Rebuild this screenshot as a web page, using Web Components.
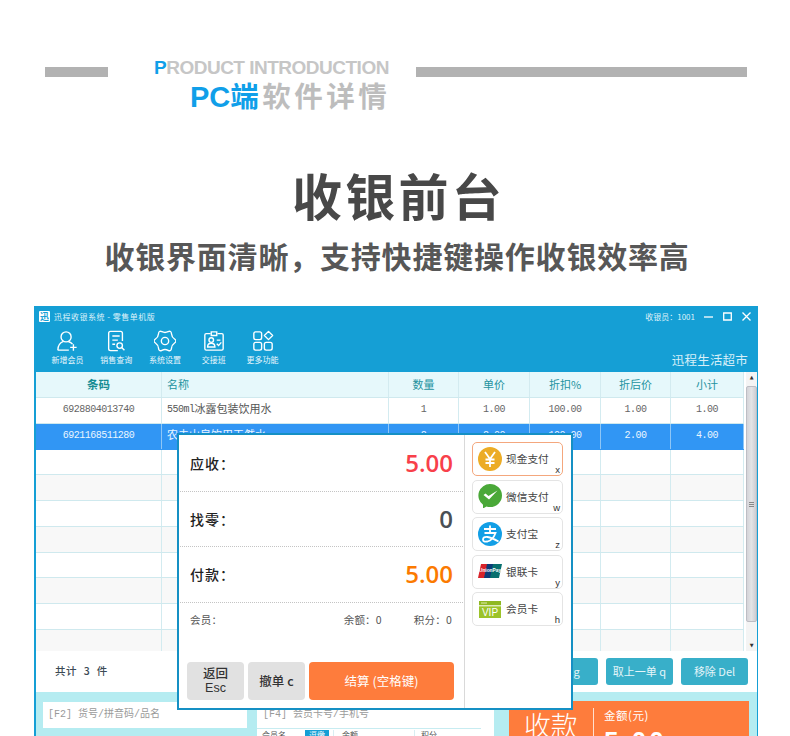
<!DOCTYPE html>
<html>
<head>
<meta charset="utf-8">
<style>
    html, body { margin: 0; height: 736px; overflow: hidden; background: #fff; }
    body { font-family: "Noto Sans CJK SC", "Liberation Sans", sans-serif; }
</style>
</head>
<body>
<intro-heading></intro-heading>
<page-title></page-title>
<pos-window></pos-window>

<script>
const CJK = '"Noto Sans CJK SC", sans-serif';

function shadow(el, html) {
    el.attachShadow({ mode: 'open' }).innerHTML = html;
}

// smooth closed outline for the gear, 6 lobes with flat top
function gearPath() {
    const pts = [];
    for (let i = 0; i < 12; i++) {
        const r = i % 2 ? 8.5 : 13.5, a = i * Math.PI / 6;
        pts.push([12 + r * Math.cos(a), 12 + r * Math.sin(a)]);
    }
    const mid = (p, q) => ((p[0] + q[0]) / 2).toFixed(2) + ' ' + ((p[1] + q[1]) / 2).toFixed(2);
    let d = 'M' + mid(pts[11], pts[0]);
    pts.forEach((p, i) => { d += 'Q' + p[0].toFixed(2) + ' ' + p[1].toFixed(2) + ' ' + mid(p, pts[(i + 1) % 12]); });
    return d + 'z';
}

class IntroHeading extends HTMLElement {
    connectedCallback() {
        shadow(this, `
            <style>
                :host { display: flex; height: 168px; box-sizing: border-box; padding: 58px 0 0 45px; align-items: flex-start; }
                .bar { height: 10px; background: #b2b2b2; margin-top: 9px; flex: none; }
                .words { width: 235px; margin: 0 27px 0 46px; flex: none; }
                .en { font: bold 19px/20px "Liberation Sans", sans-serif; color: #c6c6c6; white-space: nowrap; letter-spacing: -0.5px; }
                .cn { font: bold 28.500px/32px ${CJK}; color: #bdbdbd; margin: 1px 0 0 36px; letter-spacing: 3.500px; white-space: nowrap; }
                .cn .pc { font-family: "Liberation Sans", sans-serif; letter-spacing: 0; font-size: 29px; }
                b { color: #109fe9; font-weight: bold; }
            </style>
            <div class="bar" style="width:63px"></div>
            <div class="words">
                <div class="en"><b>P</b>RODUCT INTRODUCTION</div>
                <div class="cn"><b class="pc">PC</b><b>端</b>软件详情</div>
            </div>
            <div class="bar" style="width:331px"></div>`);
    }
}

class PageTitle extends HTMLElement {
    connectedCallback() {
        shadow(this, `
            <style>
                :host { display: block; height: 138px; text-align: center; font-family: ${CJK}; font-weight: bold; }
                h1 { margin: 0; font-size: 50px; line-height: 52px; color: #484848; letter-spacing: 3.300px; padding-left: 7px; font-weight: bold; }
                p { margin: 18px 0 0; padding-left: 4px; font-size: 30px; line-height: 34px; color: #575757; letter-spacing: .8px; }
            </style>
            <h1>收银前台</h1>
            <p>收银界面清晰，支持快捷键操作收银效率高</p>`);
    }
}

class ToolItem extends HTMLElement {
    connectedCallback() {
        shadow(this, `
            <style>
                :host { display: flex; flex-direction: column; align-items: center; width: 48.800px; color: #e8f6fc; font-size: 8px; line-height: 10px; }
                svg { width: 22px; height: 22px; margin-bottom: 3px; fill: none; stroke: #fff; stroke-width: 1.500; }
            </style>
            <svg viewBox="0 0 24 24">${this.dataset.icon}</svg>
            <slot></slot>`);
    }
}

const ICONS = {
    member: '<circle cx="11" cy="7.500" r="5.500"/><path d="M2 22c0-5 2.500-8 6-9.500M13.500 12.500c2 .5 3.500 1.500 4.500 3M2 22h12M19 15.500v7M15.500 19h7"/>',
    query: '<path d="M19 12V3.500Q19 1.500 17 1.500H6Q4 1.500 4 3.500v17Q4 22.500 6 22.500h8M8 6.500h8M8 11h6M8 15.500h3"/><circle cx="16" cy="17" r="3"/><path d="M18.200 19.200l3 3"/>',
    settings: '<path d="' + gearPath() + '"/><circle cx="12" cy="12" r="4"/>',
    shift: '<path d="M8 4H3.500q-1.500 0-1.500 1.500v15Q2 22 3.500 22h17q1.500 0 1.500-1.500v-15Q22 4 20.500 4H16M9 2h6v4H9z"/><circle cx="9" cy="11" r="2.500"/><path d="M5 18.500c0-2.500 1.500-4 4-4s4 1.500 4 4zM15 11h4M15 15l2 2 3-3.500"/>',
    more: '<rect x="2" y="2" width="8.500" height="8.500" rx="2"/><rect x="2" y="13.500" width="8.500" height="8.500" rx="2"/><rect x="13.500" y="13.500" width="8.500" height="8.500" rx="2"/><path d="M18 1.500l4.500 4.500-4.500 4.500-4.500-4.500z" stroke-linejoin="round"/>'
};

class PosWindow extends HTMLElement {
    connectedCallback() {
        const tools = [
            ['member', '新增会员'], ['query', '销售查询'], ['settings', '系统设置'],
            ['shift', '交接班'], ['more', '更多功能']
        ].map(([k, t]) => `<tool-item data-icon='${ICONS[k]}'>${t}</tool-item>`).join('');
        shadow(this, `
            <style>
                :host { display: block; position: relative; margin: 0 32px 0 34px; height: 430px; overflow: hidden; background: #159fd5; box-sizing: border-box; padding: 0 1px 0 2px; }
                .titlebar { display: flex; align-items: center; height: 22px; padding: 0 6px 1px 3px; box-sizing: border-box; color: #dff2fa; font-size: 8px; }
                .logo { width: 11px; height: 11px; background: #fff; border-radius: 1px; margin-right: 4px; color: #159fd5; font: bold 9px/11px ${CJK}; text-align: center; }
                .titlebar .grow { flex: 1; letter-spacing: .5px; }
                .winbtn { display: flex; gap: 10px; margin-left: 9px; align-items: center; }
                .winbtn svg { width: 9px; height: 9px; stroke: #fff; fill: none; stroke-width: 1.300; display: block; }
                .toolbar { display: flex; height: 44px; padding: 2px 0 0 7px; box-sizing: border-box; position: relative; }
                .shop { position: absolute; right: 9px; bottom: 5px; font-size: 12.500px; line-height: 14px; color: #d8eff8; letter-spacing: .2px; }
            </style>
            <div class="titlebar">
                <div class="logo">迅</div>
                <div class="grow">迅程收银系统&nbsp;-&nbsp;零售单机版</div>
                <div>收银员：1001</div>
                <div class="winbtn">
                    <svg viewBox="0 0 9 9"><path d="M0 5h9"/></svg>
                    <svg viewBox="0 0 9 9"><path d="M.7 1h7.600v7H.7z"/></svg>
                    <svg viewBox="0 0 9 9"><path d="M.5.500l8 8M8.500.500l-8 8"/></svg>
                </div>
            </div>
            <div class="toolbar">${tools}<div class="shop">迅程生活超市</div></div>
            <sale-grid></sale-grid>
            <sale-footer></sale-footer>
            <pay-dialog></pay-dialog>`);
    }
}

class SaleGrid extends HTMLElement {
    connectedCallback() {
        const cols = '126px 227px 70px 71px 71px 70px 73px';
        const cell = (t, cls = '') => `<div class="c ${cls}">${t}</div>`;
        const row = (vals, cls = '') => `<div class="r ${cls}">${vals.map((v, i) => cell(v, i == 1 ? 'name' : '')).join('')}</div>`;
        let empty = '';
        for (let i = 0; i < 8; i++) empty += row(['', '', '', '', '', '', ''], 'blank');
        shadow(this, `
            <style>
                :host { display: flex; height: 279px; font: 10px/1 "Liberation Mono", ${CJK}; letter-spacing: -.5px; color: #666; background: #fff; overflow: hidden; }
                .table { width: 708px; flex: none; }
                .r { display: grid; grid-template-columns: ${cols}; height: 25.750px; box-sizing: border-box; border-bottom: 1px solid #cfe9ee; }
                .c { border-right: 1.500px solid #d3ebf0; display: flex; align-items: center; justify-content: center; white-space: nowrap; overflow: hidden; }
                .c.name { justify-content: flex-start; padding-left: 5px; font-size: 11px; color: #555; letter-spacing: 0; }
                .c.name i { font-style: normal; font-size: 10px; letter-spacing: -.5px; }
                .head { background: #e6f8fb; height: 26px; color: #24939f; font: 11px/1 ${CJK}; letter-spacing: 0; }
                .head .c.name { color: #24939f; }
                .head .c:first-child { font-weight: bold; font-size: 11.500px; color: #168c93; }
                .sel { background: #3196f4; color: #e9f5ff; border-bottom-color: #3196f4; }
                .sel .c { border-right-color: #8ec6f6; }
                .sel .c.name { color: #e9f5ff; }
                .blank:nth-child(odd) { background: #f8f8f8; }
                .r:last-child { height: 21px; border-bottom: 0; }
                .bar { flex: 1; background: #f4f4f4; display: flex; flex-direction: column; align-items: center; margin-left: 2px; }
                .arrow { height: 11px; flex: none; color: #333; font-size: 5px; line-height: 11px; font-family: "DejaVu Sans", sans-serif; }
                .thumb { width: 100%; height: 236px; margin-top: 3px; box-sizing: border-box; border: 1px solid #bdbdc4; border-radius: 2px; background: linear-gradient(90deg, #d4d4d9, #e4e4e6 50%, #cdcdd3); display: flex; align-items: center; justify-content: center; }
                .grip { width: 5px; height: 5px; background: repeating-linear-gradient(#888 0 1px, transparent 1px 2px); }
                .gap { flex: 1; }
            </style>
            <div class="table">
                <div class="r head">${['条码', '名称', '数量', '单价', '折扣%', '折后价', '小计'].map((t, i) => cell(t, i == 1 ? 'name' : '')).join('')}</div>
                ${row(['6928804013740', '<i>550ml</i>冰露包装饮用水', '1', '1.00', '100.00', '1.00', '1.00'])}
                ${row(['6921168511280', '农夫山泉饮用天然水', '2', '2.00', '100.00', '2.00', '4.00'], 'sel')}
                ${empty}
            </div>
            <div class="bar"><div class="arrow">▲</div><div class="thumb"><div class="grip"></div></div><div class="gap"></div><div class="arrow">▼</div></div>`);
    }
}

class SaleFooter extends HTMLElement {
    connectedCallback() {
        shadow(this, `
            <style>
                :host { display: block; background: #b5ecf1; font-family: ${CJK}; }
                .top { display: flex; align-items: center; height: 41px; background: #fff; padding: 0 9px 1px 19px; box-sizing: border-box; gap: 8px; font-size: 10.500px; color: #3c4a55; }
                .total { flex: 1; font-weight: 500; letter-spacing: .6px; word-spacing: 3.500px; margin-bottom: 2px; }
                .act { width: 67px; height: 27px; background: #38afc9; color: #e4f5f9; border-radius: 3px; font: 11px/27px ${CJK}; text-align: center; white-space: nowrap; }
                .bottom { display: flex; height: 44px; padding: 10px 8px 0 7px; box-sizing: border-box; }
                .search { width: 204px; height: 26px; background: #fff; font: 10px/26px "Liberation Mono", ${CJK}; color: #9a9a9a; padding-left: 5px; box-sizing: border-box; margin-right: 10px; flex: none; }
                .vip { width: 237px; background: #fff; margin-right: 15px; flex: none; font: 10px/26px "Liberation Mono", ${CJK}; color: #9a9a9a; box-sizing: border-box; }
                .vip .ph { padding-left: 6px; height: 26px; border-bottom: 1px solid #c7ecf1; margin-right: 13px; }
                .vip .info { display: flex; font: 8px/10px ${CJK}; color: #555; padding: 1px 0 0 5px; }
                .badge { background: #159fd5; color: #fff; width: 24px; text-align: center; margin: 0 4px 0 19px; }
                .cell { border-left: 1px solid #d8eef2; padding-left: 8px; width: 72px; }
                .pay { flex: 1; background: #fe7c3c; color: #fff; display: flex; height: 60px; margin-top: -1px; padding: 7px 0 0 15px; box-sizing: border-box; }
                .big { font-size: 27px; line-height: 34px; font-weight: 300; width: 69px; border-right: 1px solid #ffe1d0; height: 40px; letter-spacing: -.2px; flex: none; }
                .sum { padding-left: 10px; font-size: 11.500px; line-height: 14px; letter-spacing: .5px; }
                .sum div { font: bold 26px/26px "Liberation Sans", sans-serif; letter-spacing: 3px; margin-top: 6px; }
            </style>
            <div class="top">
                <div class="total">共计 3 件</div>
                <div class="act">挂单 g</div>
                <div class="act">取上一单 q</div>
                <div class="act">移除 Del</div>
            </div>
            <div class="bottom">
                <div class="search">[F2] 货号/拼音码/品名</div>
                <div class="vip">
                    <div class="ph">[F4] 会员卡号/手机号</div>
                    <div class="info">会员名<span class="badge">逗缴</span><span class="cell">余额</span><span class="cell" style="padding-left:6px">积分</span></div>
                </div>
                <div class="pay">
                    <div class="big">收款</div>
                    <div class="sum">金额(元)<div>5.00</div></div>
                </div>
            </div>`);
    }
}

class PayOption extends HTMLElement {
    connectedCallback() {
        shadow(this, `
            <style>
                :host { display: flex; align-items: center; height: 34px; box-sizing: border-box; border: 1px solid #e4e4e4; border-radius: 5px; position: relative; padding: 0 0 1px 5px; font-size: 10.700px; color: #444; }
                :host([active]) { border-color: #f4a77d; }
                .key { position: absolute; right: 2px; bottom: 0; font: 500 9.500px/11px "Liberation Sans", sans-serif; color: #333; }
            </style>
            <slot name="icon"></slot>
            <slot></slot>
            <span class="key">${this.dataset.key}</span>`);
    }
}

class PayDialog extends HTMLElement {
    connectedCallback() {
        const line = (label, val, color) => `
            <div class="line"><span>${label}</span><b style="color:${color}">${val}</b></div>`;
        shadow(this, `
            <style>
                :host { position: absolute; left: 143px; top: 127px; width: 396px; height: 277px; background: #fff; border: 2px solid #1590c4; box-sizing: border-box; display: flex; font-family: ${CJK}; }
                .main { width: 286px; flex: none; border-right: 1px solid #d9d9d9; box-sizing: border-box; padding: 1px 0 0; }
                .line { height: 55.600px; box-sizing: border-box; border-bottom: 1px dotted #c4c4c4; margin: 0 1px; padding: 0 10px 0 10px; display: flex; align-items: center; justify-content: space-between; font-size: 14px; font-weight: 500; color: #222; letter-spacing: 1px; }
                .line b { font: 600 24px/1 "Open Sans", sans-serif; letter-spacing: 0; }
                .vip { display: flex; font-size: 10.500px; color: #555; padding: 10px 12px 0 11px; line-height: 14px; letter-spacing: .2px; }
                .vip span:first-child { flex: 1; }
                .vip span + span { margin-left: 32px; }
                .btns { display: flex; gap: 4px; padding: 0 10px 0 8px; margin-top: 35px; }
                .btn { height: 38px; border-radius: 4px; background: #e1e1e1; width: 57px; display: flex; flex-direction: column; align-items: center; justify-content: center; text-align: center; font-size: 12.500px; line-height: 15.500px; color: #333; font-weight: 500; flex: none; }
                .btn .en { font-family: "Liberation Sans", sans-serif; }
                .btn.ok { background: #fe7c3c; color: #fff; flex: 1; width: auto; font-weight: 400; }
                .side { flex: 1; display: flex; flex-direction: column; gap: 3.500px; padding: 7px 8px 0 7px; }
                svg { width: 24px; height: 24px; margin-right: 4px; display: block; flex: none; }
            </style>
            <div class="main">
                ${line('应收：', '5.00', '#f8404a')}
                ${line('找零：', '0', '#4a4f55')}
                ${line('付款：', '5.00', '#fb7a00')}
                <div class="vip"><span>会员：</span><span>余额：0</span><span>积分：0</span></div>
                <div class="btns">
                    <div class="btn"><div>返回</div><div class="en">Esc</div></div>
                    <div class="btn">撤单 c</div>
                    <div class="btn ok">结算 (空格键)</div>
                </div>
            </div>
            <div class="side">
                <pay-option active data-key="x">
                    <svg slot="icon" viewBox="0 0 24 24"><circle cx="12" cy="12" r="12" fill="#ecac26"/><path d="M7 5l5 7 5-7M12 12v8M7.500 12.500h9M7.500 16h9" stroke="#fff" stroke-width="1.800" fill="none"/></svg>现金支付
                </pay-option>
                <pay-option data-key="w">
                    <svg slot="icon" viewBox="0 0 24 24"><path d="M12 0a12 11.500 0 0 1 0 23q-2 0-3.500-.5L5 24.500v-3.800A11.500 11.500 0 0 1 12 0z" fill="#4aa838"/><path d="M5.500 11l2-1.500 3 2.500 9-5.500-8.500 9z" fill="#fff"/></svg>微信支付
                </pay-option>
                <pay-option data-key="z">
                    <svg slot="icon" viewBox="0 0 24 24"><circle cx="12" cy="12" r="12" fill="#129fe6"/><path d="M6 7h12M12 3.500V11M6.500 11h11q-2.500 7-8 8.500-4.500.8-4.500-2 0-3 4.500-2.500 4 .5 11 4.500" stroke="#fff" stroke-width="1.800" fill="none"/></svg>支付宝
                </pay-option>
                <pay-option data-key="y">
                    <svg slot="icon" viewBox="0 0 24 24"><path d="M3 5h8l-3 14H0z" fill="#d8232a"/><path d="M9 5h8l-3 14H6z" fill="#0b3c78"/><path d="M15 5h9l-3 14h-9z" fill="#08706f"/><text x="12" y="13" text-anchor="middle" font-family="Liberation Sans" font-weight="bold" font-size="4.800" fill="#fff">UnionPay</text></svg>银联卡
                </pay-option>
                <pay-option data-key="h">
                    <svg slot="icon" viewBox="0 0 24 24"><path d="M1 4h22v4.300H1z" fill="#8fb822"/><path d="M1 9.300h22V21H1z" fill="#9cc32a"/><path d="M3 6h6" stroke="#dfeab0"/><text x="12" y="19" text-anchor="middle" font-family="Liberation Sans" font-size="10" fill="#fff">VIP</text></svg>会员卡
                </pay-option>
            </div>`);
    }
}

customElements.define('intro-heading', IntroHeading);
customElements.define('page-title', PageTitle);
customElements.define('tool-item', ToolItem);
customElements.define('pos-window', PosWindow);
customElements.define('sale-grid', SaleGrid);
customElements.define('sale-footer', SaleFooter);
customElements.define('pay-option', PayOption);
customElements.define('pay-dialog', PayDialog);
</script>
</body>
</html>
